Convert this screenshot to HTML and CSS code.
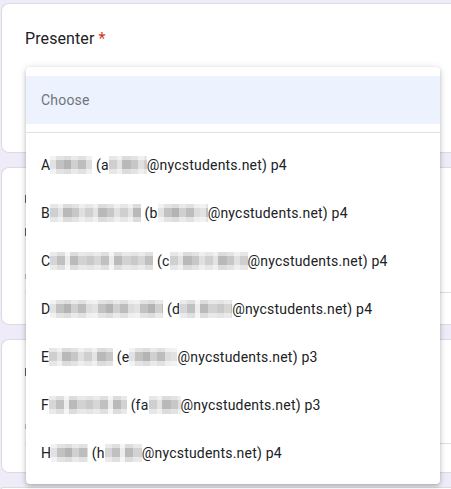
FILE: index.html
```html
<!DOCTYPE html>
<html lang="en">
<head>
<meta charset="utf-8">
<title>Presenter</title>
<link rel="stylesheet" href="styles.css">
</head>
<body>
<div class="page">
  <section class="card card-1">
    <div class="q-title">Presenter <span class="req">*</span></div>
  </section>
  <section class="card card-2">
    <div class="mark mark-dark m-1"></div>
    <div class="mark mark-dark m-2"></div>
    <div class="mark mark-light m-3"></div>
    <div class="q-line line-2"></div>
  </section>
  <section class="card card-3">
    <div class="mark mark-dark m-4"></div>
    <div class="mark mark-light m-5"></div>
    <div class="q-line line-3"></div>
  </section>
  <section class="card card-4"></section>

  <div class="menu" role="listbox">
    <div class="opt opt-choose">Choose</div>
    <div class="menu-divider"></div>
    <div class="opt">A<span class="blur" style="width:42px"></span> (a<span class="blur b2" style="width:38px"></span>@nycstudents.net) p4</div>
    <div class="opt">B<span class="blur b2" style="width:91px"></span> (b<span class="blur" style="width:50px"></span>@nycstudents.net) p4</div>
    <div class="opt">C<span class="blur b3" style="width:103px"></span> (c<span class="blur b2" style="width:78px"></span>@nycstudents.net) p4</div>
    <div class="opt">D<span class="blur" style="width:113px"></span> (d<span class="blur b3" style="width:52px"></span>@nycstudents.net) p4</div>
    <div class="opt">E<span class="blur b2" style="width:64px"></span> (e<span class="blur" style="width:48px"></span>@nycstudents.net) p3</div>
    <div class="opt">F<span class="blur b3" style="width:78px"></span> (fa<span class="blur b2" style="width:32px"></span>@nycstudents.net) p3</div>
    <div class="opt">H<span class="blur" style="width:37px"></span> (h<span class="blur b3" style="width:37px"></span>@nycstudents.net) p4</div>
  </div>
</div>
</body>
</html>
```

FILE: styles.css
```css
html, body {
  margin: 0;
  padding: 0;
}
body {
  background: #f0ebf8;
  font-family: Roboto, "Noto Sans", "Liberation Sans", sans-serif;
  color: #202124;
  overflow: hidden;
  width: 451px;
  height: 489px;
}
.page {
  position: relative;
  padding-top: 3px;
}
.card {
  box-sizing: border-box;
  margin: 0 0 14px 1px;
  width: 450px;
  background: #fff;
  border: 1px solid #dadce0;
  border-right: 0;
  border-radius: 8px 0 0 8px;
  padding: 23px 0 0 23px;
}
.card-1 { height: 150px; }
.card-2 { height: 158px; padding-top: 22px; }
.card-3 { height: 134px; padding-top: 22px; }
.card-4 { height: 2px; margin-bottom: 0; padding: 0; border-bottom: 0; border-radius: 8px 0 0 0; }

.q-title {
  font-size: 16px;
  line-height: 24px;
  letter-spacing: 0.1px;
}
.req { color: #d93025; }

.mark {
  width: 3px;
  height: 8px;
}
.mark-dark { background: #5f6368; }
.mark-light { background: #bdc1c6; height: 5px; }
.m-1 { margin-top: 5px; }
.m-2 { margin-top: 25px; }
.m-3 { margin-top: 38px; }
.m-4 { margin-top: 6px; }
.m-5 { margin-top: 48px; }
.q-line {
  height: 1px;
  background: #e0e0e0;
}
.line-2 { margin-top: 13px; }
.line-3 { margin-top: 14px; }

.menu {
  position: absolute;
  left: 26px;
  top: 67px;
  width: 414px;
  box-sizing: border-box;
  padding: 9px 0 7px;
  background: #fff;
  border-radius: 4px;
  box-shadow: 0 2px 4px rgba(0, 0, 0, 0.2), 0 1px 8px rgba(0, 0, 0, 0.12);
}
.opt {
  height: 48px;
  display: flex;
  align-items: center;
  padding-left: 15px;
  font-size: 14px;
  letter-spacing: 0.2px;
  white-space: pre;
  color: #202124;
}
.opt-choose {
  background: #ecf3fe;
  color: #70757a;
}
.menu-divider {
  height: 1px;
  background: #e0e0e0;
  margin: 8px 0;
}
.blur {
  display: inline-block;
  height: 18px;
  background:
    linear-gradient(180deg, rgba(255,255,255,0.55) 0 4px, rgba(255,255,255,0) 4px 13px, rgba(255,255,255,0.55) 13px),
    repeating-linear-gradient(90deg, #e2e2e2 0 6px, #c2c2c2 6px 14px, #b4b4b4 14px 21px, #d0d0d0 21px 28px, #bdbdbd 28px 36px, #dcdcdc 36px 42px);
}
.b2 {
  background:
    linear-gradient(180deg, rgba(255,255,255,0.5) 0 4px, rgba(255,255,255,0) 4px 13px, rgba(255,255,255,0.5) 13px),
    repeating-linear-gradient(90deg, #cfcfcf 0 8px, #e3e3e3 8px 13px, #b9b9b9 13px 22px, #c7c7c7 22px 29px, #e0e0e0 29px 35px);
}
.b3 {
  background:
    linear-gradient(180deg, rgba(255,255,255,0.5) 0 4px, rgba(255,255,255,0) 4px 13px, rgba(255,255,255,0.5) 13px),
    repeating-linear-gradient(90deg, #d6d6d6 0 7px, #c0c0c0 7px 15px, #ececec 15px 20px, #bababa 20px 28px, #d2d2d2 28px 37px, #c9c9c9 37px 44px);
}
```
